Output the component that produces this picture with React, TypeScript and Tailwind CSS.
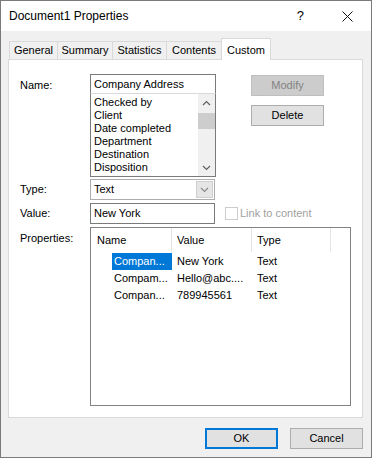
import { useState } from 'react';

const font = { fontFamily: '"Liberation Sans", Arial, sans-serif' };

const tabs = ['General', 'Summary', 'Statistics', 'Contents', 'Custom'];
const tabWidths: Record<string, string> = {
  General: 'w-[49px]',
  Summary: 'w-[56px]',
  Statistics: 'w-[55px]',
  Contents: 'w-[56px]',
  Custom: 'w-[50px]',
};

const fields = ['Checked by', 'Client', 'Date completed', 'Department', 'Destination', 'Disposition'];

const props = [
  { name: 'Compan...', value: 'New York', type: 'Text' },
  { name: 'Compam...', value: 'Hello@abc....', type: 'Text' },
  { name: 'Compan...', value: '789945561', type: 'Text' },
];

const Chevron = ({ up, color = '#606060' }: { up?: boolean; color?: string }) => (
  <svg width="9" height="6" viewBox="0 0 9 6" className="block">
    <path
      d={up ? 'M1 5 L4.5 1.5 L8 5' : 'M1 1 L4.5 4.5 L8 1'}
      fill="none"
      stroke={color}
      strokeWidth="1.2"
    />
  </svg>
);

export default function App() {
  const [active] = useState('Custom');

  return (
    <div className="h-[460px] w-[373px] bg-white text-[11px] text-black" style={font}>
      <div className="flex h-[458px] w-[372px] flex-col border border-[#7a7a7a] bg-[#f0f0f0]">
        {/* title bar */}
        <div className="flex h-[30px] items-center bg-white pl-[8px]">
          <span className="text-[12px]">Document1 Properties</span>
          <span className="ml-auto mr-[38px] text-[13px]">?</span>
          <svg width="11" height="11" viewBox="0 0 11 11" className="mr-[18px]">
            <path d="M0.5 0.5 L10.5 10.5 M10.5 0.5 L0.5 10.5" stroke="#111" strokeWidth="1" />
          </svg>
        </div>

        {/* tabs */}
        <div className="relative z-10 mt-[7px] flex h-[21px] items-end pl-[8px]">
          {tabs.map((t) =>
            t === active ? (
              <div
                key={t}
                className={`${tabWidths[t]} -mb-px flex h-[22px] items-start justify-center border border-b-0 border-[#d9d9d9] bg-white pt-[3px]`}
              >
                {t}
              </div>
            ) : (
              <div
                key={t}
                className={`${tabWidths[t]} -mr-px flex h-[18px] items-center justify-center border border-b-0 border-[#d9d9d9] bg-[#f0f0f0]`}
              >
                {t}
              </div>
            )
          )}
        </div>

        {/* panel */}
        <div className="ml-[7px] flex h-[359px] w-[355px] flex-col border border-[#d9d9d9] bg-white pl-[11px] pt-[14px]">
          <div className="flex">
            <div className="w-[70px] pt-[3px]">Name:</div>
            <div className="flex w-[126px] flex-col">
              <div className="flex h-[20px] items-center border border-[#7a7a7a] pl-[3px]">
                Company Address
              </div>
              <div className="-mt-px flex h-[84px] border border-[#7a7a7a] border-t-[#d9d9d9]">
                <div className="flex-1 overflow-hidden pl-[3px] pt-[2px] leading-[13px]">
                  {fields.map((f) => (
                    <div key={f} className="h-[13px] whitespace-nowrap">
                      {f}
                    </div>
                  ))}
                </div>
                <div className="flex w-[17px] flex-col bg-[#f0f0f0]">
                  <div className="flex h-[17px] items-center justify-center">
                    <Chevron up />
                  </div>
                  <div className="mt-[2px] h-[16px] bg-[#cdcdcd]" />
                  <div className="mt-auto flex h-[17px] items-center justify-center">
                    <Chevron />
                  </div>
                </div>
              </div>
            </div>
            <div className="ml-[35px] flex flex-col gap-[9px] pt-[1px]">
              <div className="flex h-[21px] w-[73px] items-center justify-center border border-[#bfbfbf] bg-[#cccccc] text-[#838383]">
                Modify
              </div>
              <div className="flex h-[21px] w-[73px] items-center justify-center border border-[#adadad] bg-[#e1e1e1]">
                Delete
              </div>
            </div>
          </div>

          <div className="mt-[2px] flex items-center">
            <div className="w-[70px]">Type:</div>
            <div className="flex h-[21px] w-[125px] items-center border border-[#adadad] bg-white pl-[3px]">
              <span>Text</span>
              <div className="ml-auto mr-px flex h-[17px] w-[17px] items-center justify-center border border-[#cfcfcf] bg-[#e5e5e5]">
                <Chevron color="#8a8a8a" />
              </div>
            </div>
          </div>

          <div className="mt-[3px] flex items-center">
            <div className="w-[70px]">Value:</div>
            <div className="flex h-[21px] w-[125px] items-center border border-[#7a7a7a] pl-[3px]">
              New York
            </div>
            <div className="ml-[10px] h-[13px] w-[13px] border border-[#cccccc] bg-white" />
            <span className="ml-[2px] text-[#a0a0a0]">Link to content</span>
          </div>

          <div className="mt-[3px] flex">
            <div className="w-[70px] pt-[3px]">Properties:</div>
            <div className="h-[179px] w-[261px] border border-[#828282]">
              <div className="flex h-[24px] items-center">
                <div className="flex h-full w-[81px] items-center border-r border-[#e5e5e5] pl-[6px]">Name</div>
                <div className="flex h-full w-[80px] items-center border-r border-[#e5e5e5] pl-[5px]">Value</div>
                <div className="flex h-full w-[79px] items-center border-r border-[#e5e5e5] pl-[5px]">Type</div>
              </div>
              <div className="pt-px">
                {props.map((p, i) => (
                  <div key={i} className="flex h-[17px] items-center">
                    <div className="flex h-full w-[81px] items-center pl-[21px]">
                      <span
                        className={`flex h-full w-full items-center whitespace-nowrap pl-[2px] ${
                          i === 0 ? 'bg-[#0078d7] text-white' : ''
                        }`}
                      >
                        {p.name}
                      </span>
                    </div>
                    <div className="w-[80px] whitespace-nowrap pl-[5px]">{p.value}</div>
                    <div className="w-[79px] pl-[5px]">{p.type}</div>
                  </div>
                ))}
              </div>
            </div>
          </div>
        </div>

        {/* footer */}
        <div className="mt-[10px] flex justify-end gap-[12px] pr-[8px]">
          <div className="flex h-[21px] w-[73px] items-center justify-center border-2 border-[#0078d7] bg-[#e1e1e1]">
            OK
          </div>
          <div className="flex h-[21px] w-[73px] items-center justify-center border border-[#adadad] bg-[#e1e1e1]">
            Cancel
          </div>
        </div>
      </div>
    </div>
  );
}
